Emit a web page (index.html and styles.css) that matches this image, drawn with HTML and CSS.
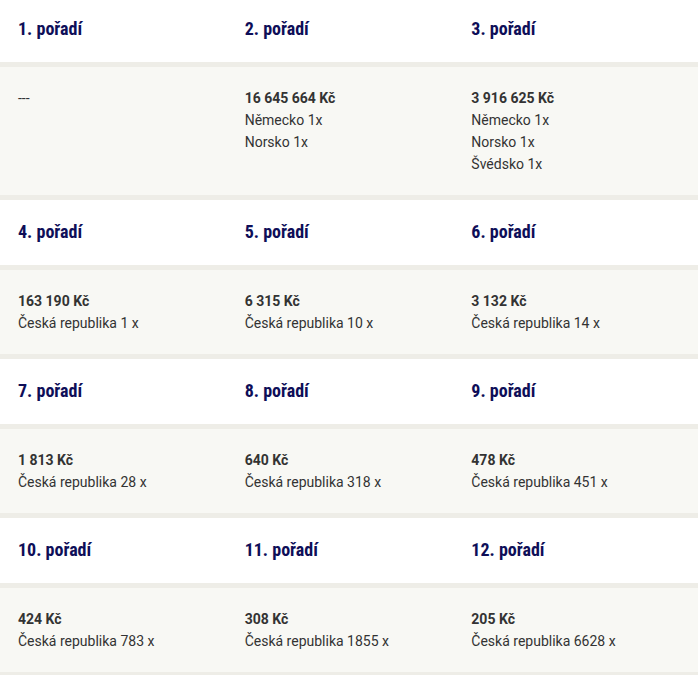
FILE: index.html
```html
<!DOCTYPE html>
<html lang="cs">
<head>
<meta charset="utf-8">
<link rel="stylesheet" href="styles.css">
</head>
<body>
<div class="table">
  <div class="row head">
    <div class="cell">1. pořadí</div>
    <div class="cell">2. pořadí</div>
    <div class="cell">3. pořadí</div>
  </div>
  <div class="row body">
    <div class="cell"><span class="dash">---</span></div>
    <div class="cell"><b>16 645 664 Kč</b><span>Německo 1x</span><span>Norsko 1x</span></div>
    <div class="cell"><b>3 916 625 Kč</b><span>Německo 1x</span><span>Norsko 1x</span><span>Švédsko 1x</span></div>
  </div>
  <div class="row head">
    <div class="cell">4. pořadí</div>
    <div class="cell">5. pořadí</div>
    <div class="cell">6. pořadí</div>
  </div>
  <div class="row body">
    <div class="cell"><b>163 190 Kč</b><span>Česká republika 1 x</span></div>
    <div class="cell"><b>6 315 Kč</b><span>Česká republika 10 x</span></div>
    <div class="cell"><b>3 132 Kč</b><span>Česká republika 14 x</span></div>
  </div>
  <div class="row head">
    <div class="cell">7. pořadí</div>
    <div class="cell">8. pořadí</div>
    <div class="cell">9. pořadí</div>
  </div>
  <div class="row body">
    <div class="cell"><b>1 813 Kč</b><span>Česká republika 28 x</span></div>
    <div class="cell"><b>640 Kč</b><span>Česká republika 318 x</span></div>
    <div class="cell"><b>478 Kč</b><span>Česká republika 451 x</span></div>
  </div>
  <div class="row head">
    <div class="cell">10. pořadí</div>
    <div class="cell">11. pořadí</div>
    <div class="cell">12. pořadí</div>
  </div>
  <div class="row body">
    <div class="cell"><b>424 Kč</b><span>Česká republika 783 x</span></div>
    <div class="cell"><b>308 Kč</b><span>Česká republika 1855 x</span></div>
    <div class="cell"><b>205 Kč</b><span>Česká republika 6628 x</span></div>
  </div>
</div>
</body>
</html>
```

FILE: styles.css
```css
html, body {
  margin: 0;
  padding: 0;
  background: #ffffff;
}
body {
  font-family: Roboto, "Liberation Sans", sans-serif;
  color: #333333;
}
.table {
  margin-top: -3px;
  width: 698px;
}
.row {
  display: grid;
  grid-template-columns: repeat(3, 1fr);
  padding-right: 18px;
  border-bottom: 5px solid #eeede7;
}
.cell {
  padding-left: 18px;
}
.head {
  background: #ffffff;
  height: 70px;
  box-sizing: border-box;
  padding-top: 21px;
  font-size: 18px;
  line-height: 21px;
  font-weight: 700;
  font-stretch: 87.5%;
  color: #0e0e58;
}
.body {
  background: #f8f8f4;
  padding-top: 20px;
  padding-bottom: 20px;
  font-size: 14px;
  line-height: 22px;
}
.body .cell {
  display: flex;
  flex-direction: column;
}
.body b {
  font-weight: 700;
}
```
